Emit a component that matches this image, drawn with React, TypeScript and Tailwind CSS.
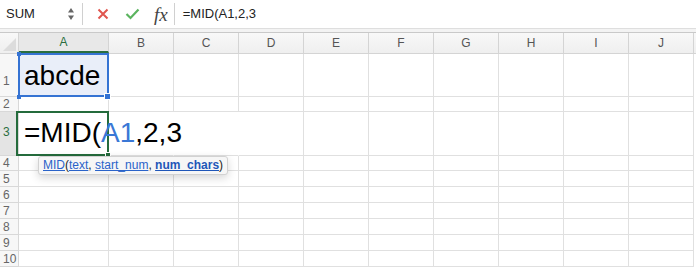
import React from 'react'

const cols = ['B', 'C', 'D', 'E', 'F', 'G', 'H', 'I', 'J']
const rows = [
  { n: 1, h: 'h-[43px]', pb: 'pb-[9px]' },
  { n: 2, h: 'h-[15px]', pb: 'pb-0' },
  { n: 3, h: 'h-[44px]', pb: 'pb-[17px]' },
  { n: 4, h: 'h-[15px]', pb: 'pb-0' },
  { n: 5, h: 'h-[16px]', pb: 'pb-0' },
  { n: 6, h: 'h-[16px]', pb: 'pb-0' },
  { n: 7, h: 'h-[16px]', pb: 'pb-0' },
  { n: 8, h: 'h-[16px]', pb: 'pb-0' },
  { n: 9, h: 'h-[16px]', pb: 'pb-0' },
  { n: 10, h: 'h-[16px]', pb: 'pb-0' },
]

function FormulaBar() {
  return (
    <div className="flex h-[29px] items-center bg-white border-b border-[#dedede]">
      <div className="flex h-full w-[82px] items-center justify-between pl-[6px] pr-[7px]">
        <span className="text-[13px] text-[#222]">SUM</span>
        <svg width="8" height="16" viewBox="0 0 8 16">
          <path d="M4 2 L7 6.5 L1 6.5 Z" fill="#666" />
          <path d="M4 14 L7 9.5 L1 9.5 Z" fill="#666" />
        </svg>
      </div>
      <div className="h-[22px] w-px bg-[#d0d0d0]" />
      <div className="flex items-center pl-[14px]">
        <svg width="12" height="12" viewBox="0 0 12 12">
          <path d="M1.5 1.5 L10.5 10.5 M10.5 1.5 L1.5 10.5" stroke="#e0564f" strokeWidth="2" />
        </svg>
        <svg className="ml-[16px]" width="15" height="12" viewBox="0 0 15 12">
          <path d="M1.5 6 L5.5 10 L13.5 1.5" stroke="#5bb45f" strokeWidth="2.2" fill="none" />
        </svg>
        <span className="ml-[14px] font-['Liberation_Serif',serif] text-[19px] italic leading-none text-[#444]">
          fx
        </span>
      </div>
      <div className="ml-[6px] h-[22px] w-px bg-[#d0d0d0]" />
      <span className="pl-[8px] text-[13px] text-[#222]">=MID(A1,2,3</span>
    </div>
  )
}

function ColumnHeader() {
  return (
    <div className="flex h-[21px] bg-gradient-to-b from-[#f8f8f8] to-[#efefef] text-[12px] text-[#555] border-b border-[#d4d4d4]">
      <div className="relative w-[19px] border-r border-[#d4d4d4]">
        <svg className="absolute right-[2px] bottom-[2px]" width="13" height="13" viewBox="0 0 13 13">
          <path d="M13 0 L13 13 L0 13 Z" fill="#dcdcdc" />
        </svg>
      </div>
      <div className="flex w-[90px] items-center justify-center bg-[#e8e8e8] text-[#2a6e3f] border-r border-[#d4d4d4] border-b-2 border-b-[#2a6e3f]">
        A
      </div>
      {cols.map((c) => (
        <div key={c} className="flex w-[65px] shrink-0 items-center justify-center border-r border-[#d4d4d4]">
          {c}
        </div>
      ))}
    </div>
  )
}

function Tooltip() {
  return (
    <div className="absolute left-[19px] top-[44px] z-20 whitespace-nowrap rounded-[3px] border border-[#d2d2d2] bg-[#f6f6f6] px-[4px] py-[1px] text-[12px] leading-[15px] text-[#222] shadow-[0_3px_8px_rgba(0,0,0,0.16)]">
      <span className="text-[#2a63c9] underline">MID</span>(
      <span className="text-[#2a63c9] underline">text</span>,{' '}
      <span className="text-[#2a63c9] underline">start_num</span>,{' '}
      <span className="font-bold text-[#1f56b8] underline">num_chars</span>)
    </div>
  )
}

function CellA({ n }: { n: number }) {
  if (n === 1) {
    return (
      <div className="relative z-10 flex h-full w-[90px] shrink-0 items-end bg-[#e9eef9] border-r border-b border-[#e0e0e0] pb-[6px] pl-[5px]">
        <div className="absolute -inset-y-px -left-px -right-px border-2 border-[#3573d3]" />
        <div className="absolute -left-[2px] -top-[2px] h-[4px] w-[4px] bg-[#3573d3]" />
        <div className="absolute -left-[2px] -bottom-[3px] h-[4px] w-[4px] bg-[#3573d3]" />
        <div className="absolute -right-[3px] -bottom-[4px] h-[7px] w-[7px] border border-white bg-[#3573d3]" />
        <span className="relative text-[28px] leading-none text-black">abcde</span>
      </div>
    )
  }
  if (n === 3) {
    return (
      <div className="relative z-10 flex h-full w-[90px] shrink-0 items-end border-r border-b border-[#e0e0e0] pb-[8px] pl-[5px]">
        <div className="absolute -top-px -bottom-px -left-[3px] -right-px border-2 border-[#246b3c]" />
        <div className="absolute -right-[3px] -bottom-[3px] h-[6px] w-[6px] border border-white bg-[#246b3c]" />
        <span className="relative whitespace-nowrap text-[28px] leading-none text-black">
          =MID(<span className="text-[#3a78d6]">A1</span>,2,3
        </span>
        <Tooltip />
      </div>
    )
  }
  return <div className="h-full w-[90px] shrink-0 border-r border-b border-[#e0e0e0]" />
}

export default function App() {
  return (
    <div className="h-[267px] w-[696px] overflow-hidden bg-white font-['Liberation_Sans',Arial,sans-serif]">
      <FormulaBar />
      <div className="h-[4px] bg-[#f3f3f3] border-b border-[#c9c9c9]" />
      <ColumnHeader />
      {rows.map((r) => (
        <div key={r.n} className={`flex ${r.h}`}>
          <div
            className={`flex h-full w-[19px] shrink-0 items-end pl-[3px] text-[12px] leading-none border-r border-b border-[#d8d8d8] ${r.pb} ${
              r.n === 3 ? 'bg-[#e4e4e4] text-[#2a6e3f]' : 'bg-[#f7f7f7] text-[#666]'
            }`}
          >
            <span className={r.n === 1 || r.n === 3 ? '' : 'pb-[1px]'}>{r.n}</span>
          </div>
          <CellA n={r.n} />
          {cols.map((c) => (
            <div
              key={c}
              className={`h-full w-[65px] shrink-0 border-b border-[#e0e0e0] ${
                r.n === 3 && (c === 'B' || c === 'C') ? 'border-r border-r-white' : 'border-r'
              }`}
            />
          ))}
        </div>
      ))}
    </div>
  )
}
